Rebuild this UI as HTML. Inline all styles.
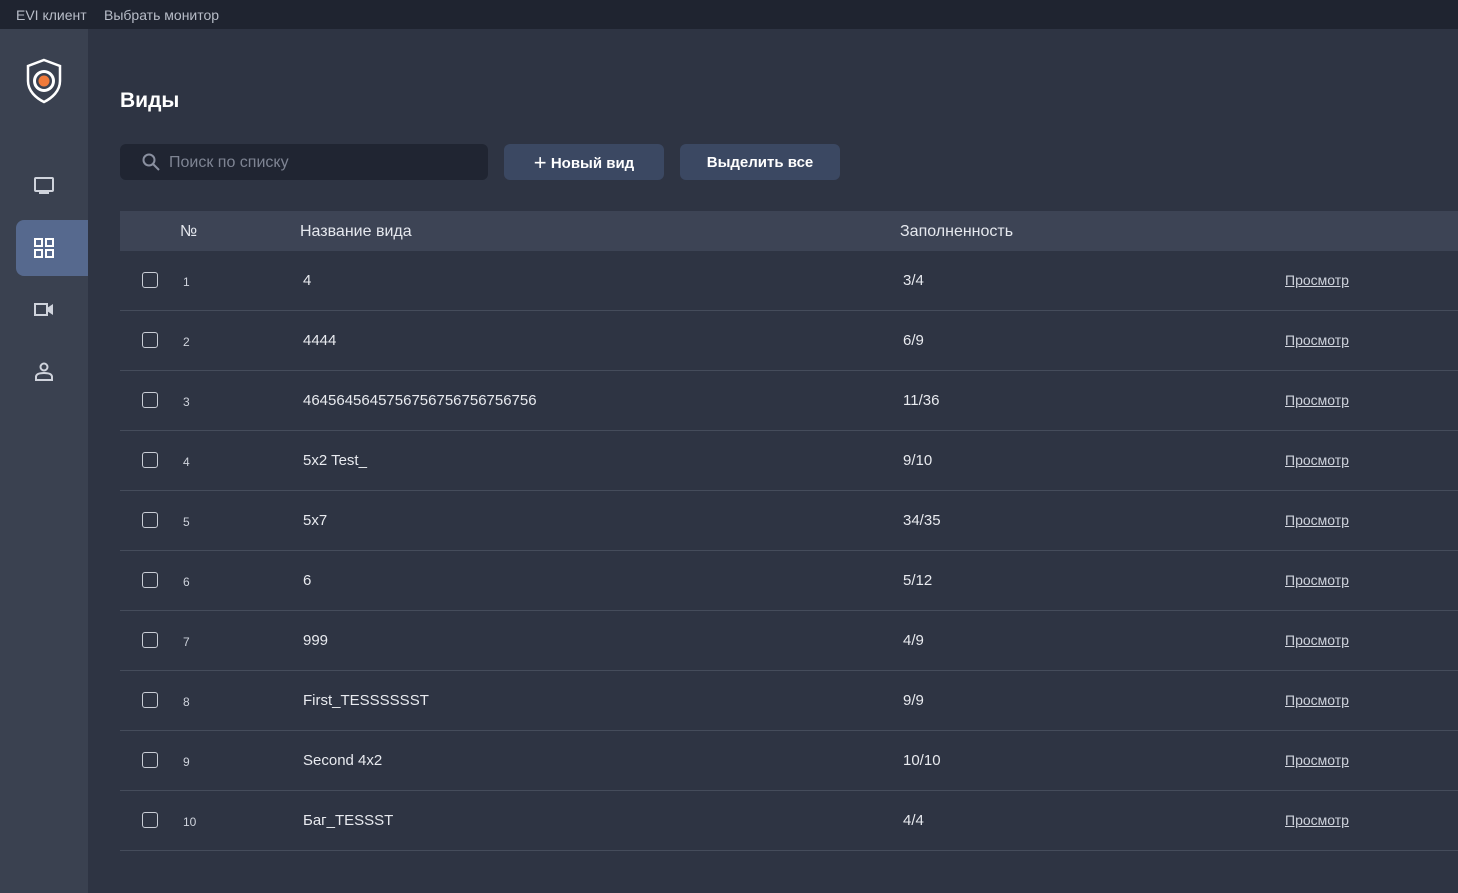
<!DOCTYPE html>
<html><head><meta charset="utf-8"><style>
*{margin:0;padding:0;box-sizing:border-box}
body{width:1458px;height:893px;overflow:hidden;background:#2e3443;font-family:"Liberation Sans","Noto Sans CJK SC",sans-serif;color:#e8eaef;position:relative}
.top{position:absolute;left:0;top:0;width:1458px;height:29px;background:#1f2430;font-size:14px;color:#b8bdc8}
.top span{position:absolute;top:7px}
.side{position:absolute;left:0;top:29px;width:88px;height:864px;background:#3a4150}
.act{position:absolute;left:16px;top:191px;width:72px;height:56px;background:#56698e;border-radius:8px 0 0 8px}
h1{position:absolute;left:120px;top:89px;font-size:21px;font-weight:bold;color:#fff}
.search{position:absolute;left:120px;top:144px;width:368px;height:36px;background:#202532;border-radius:6px;font-size:16px;color:#7e8493}
.btn{position:absolute;top:144px;height:36px;width:160px;background:#3b4862;border-radius:6px;font-size:15px;font-weight:bold;color:#fff;text-align:center;line-height:37px}
.thead{position:absolute;left:120px;top:211px;width:1338px;height:40px;background:#3d4455;font-size:16px;color:#e5e8ee}
.thead span{position:absolute;top:12px}
.row{position:absolute;left:120px;width:1338px;height:60px;border-bottom:1px solid #454c5b;font-size:15px}
.row span{position:absolute;top:21px}
.cb{position:absolute;left:22px;top:21px;width:16px;height:16px;border:1.5px solid #c9cdd6;border-radius:3px}
.n{left:63px;font-size:12px;top:24px!important;color:#cfd3dc}
.v{left:183px}.f{left:783px}
.l{left:1165px;text-decoration:underline;font-size:14px;color:#cfd3dc}
</style></head><body>
<div class="top"><span style="left:16px">EVI клиент</span><span style="left:104px">Выбрать монитор</span></div>
<div class="side">
<svg style="position:absolute;left:24px;top:28px" width="40" height="48" viewBox="0 0 40 48"><path d="M20 3 L36 9 V24 C36 34 28 41 20 45 C12 41 4 34 4 24 V9 Z" fill="none" stroke="#fff" stroke-width="2.5"/><circle cx="20" cy="24" r="11" fill="#fff"/><circle cx="20" cy="24" r="8" fill="#3a4150"/><circle cx="20" cy="24" r="5.5" fill="#f07a3a"/></svg>
<div class="act"></div>
<svg style="position:absolute;left:33px;top:148px" width="22" height="20" viewBox="0 0 22 20"><rect x="2" y="1" width="18" height="13" rx="1" fill="none" stroke="#cfd3dc" stroke-width="2"/><rect x="6" y="15" width="10" height="2" fill="#cfd3dc"/></svg>
<svg style="position:absolute;left:34px;top:209px" width="20" height="20" viewBox="0 0 20 20" fill="none" stroke="#fff" stroke-width="2"><rect x="1" y="1" width="7" height="7"/><rect x="12" y="1" width="7" height="7"/><rect x="1" y="12" width="7" height="7"/><rect x="12" y="12" width="7" height="7"/></svg>
<svg style="position:absolute;left:34px;top:273px" width="20" height="16" viewBox="0 0 20 16"><rect x="1" y="2" width="12" height="11" fill="none" stroke="#cfd3dc" stroke-width="2"/><path d="M13 6 L19 2 V13 L13 9Z" fill="#cfd3dc"/></svg>
<svg style="position:absolute;left:35px;top:333px" width="18" height="20" viewBox="0 0 18 20" fill="none" stroke="#cfd3dc" stroke-width="2"><circle cx="9" cy="5" r="3.5"/><path d="M1 18 V15 C1 12 5 11 9 11 C13 11 17 12 17 15 V18 Z"/></svg>
</div>
<h1>Виды</h1>
<div class="search"><svg style="position:absolute;left:22px;top:9px" width="18" height="18" viewBox="0 0 18 18" fill="none" stroke="#8a90a0" stroke-width="2"><circle cx="7" cy="7" r="5.5"/><path d="M11 11 L17 17"/></svg><span style="position:absolute;left:49px;top:10px">Поиск по списку</span></div>
<div class="btn" style="left:504px"><span style="font-size:22px;font-weight:normal;vertical-align:-2px">+</span> Новый вид</div>
<div class="btn" style="left:680px">Выделить все</div>
<div class="thead"><span style="left:60px">№</span><span style="left:180px">Название вида</span><span style="left:780px">Заполненность</span></div>
<div class="row" style="top:251px"><div class="cb"></div><span class="n">1</span><span class="v">4</span><span class="f">3/4</span><span class="l">Просмотр</span></div>
<div class="row" style="top:311px"><div class="cb"></div><span class="n">2</span><span class="v">4444</span><span class="f">6/9</span><span class="l">Просмотр</span></div>
<div class="row" style="top:371px"><div class="cb"></div><span class="n">3</span><span class="v">4645645645756756756756756756</span><span class="f">11/36</span><span class="l">Просмотр</span></div>
<div class="row" style="top:431px"><div class="cb"></div><span class="n">4</span><span class="v">5x2 Test_</span><span class="f">9/10</span><span class="l">Просмотр</span></div>
<div class="row" style="top:491px"><div class="cb"></div><span class="n">5</span><span class="v">5x7</span><span class="f">34/35</span><span class="l">Просмотр</span></div>
<div class="row" style="top:551px"><div class="cb"></div><span class="n">6</span><span class="v">6</span><span class="f">5/12</span><span class="l">Просмотр</span></div>
<div class="row" style="top:611px"><div class="cb"></div><span class="n">7</span><span class="v">999</span><span class="f">4/9</span><span class="l">Просмотр</span></div>
<div class="row" style="top:671px"><div class="cb"></div><span class="n">8</span><span class="v">First_TESSSSSST</span><span class="f">9/9</span><span class="l">Просмотр</span></div>
<div class="row" style="top:731px"><div class="cb"></div><span class="n">9</span><span class="v">Second 4x2</span><span class="f">10/10</span><span class="l">Просмотр</span></div>
<div class="row" style="top:791px"><div class="cb"></div><span class="n">10</span><span class="v">Баг_TESSST</span><span class="f">4/4</span><span class="l">Просмотр</span></div>
</body></html>
